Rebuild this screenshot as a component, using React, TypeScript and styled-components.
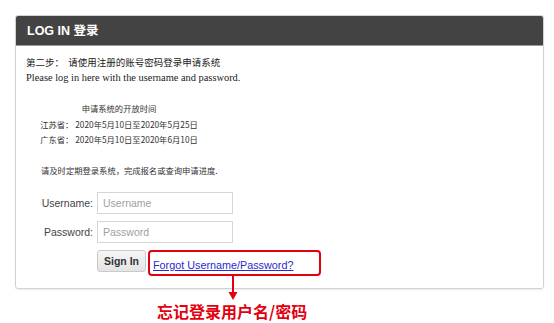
import React from "react";
import styled, { createGlobalStyle } from "styled-components";

const GlobalStyle = createGlobalStyle`
  html, body {
    margin: 0;
    padding: 0;
    background: #ffffff;
  }
  body {
    font-family: "Liberation Sans", Arial, "Noto Sans CJK SC", sans-serif;
  }
`;

const App = () => {
  return (
    <Page>
      <GlobalStyle />
      <Panel>
        <Header>LOG IN 登录</Header>
        <Body>
          <StepLine>第二步：&nbsp; 请使用注册的账号密码登录申请系统</StepLine>
          <SerifLine>Please log in here with the username and password.</SerifLine>

          <Schedule>
            <SmallLine>申请系统的开放时间</SmallLine>
            <SmallLine>江苏省：&nbsp;2020年5月10日至2020年5月25日</SmallLine>
            <SmallLine>广东省：&nbsp;2020年5月10日至2020年6月10日</SmallLine>
          </Schedule>

          <Notice>请及时定期登录系统，完成报名或查询申请进度.</Notice>

          <Form>
            <FieldLabel>Username:</FieldLabel>
            <Input placeholder="Username" />
            <FieldLabel>Password:</FieldLabel>
            <Input placeholder="Password" type="password" />
            <span />
            <Actions>
              <SignIn>Sign In</SignIn>
              <Highlight>
                <ForgotLink href="#">Forgot Username/Password?</ForgotLink>
                <Arrow width="10" height="26" viewBox="0 0 10 26">
                  <line x1="5" y1="0" x2="5" y2="17" stroke="#e3000f" strokeWidth="2" />
                  <polygon points="0.5,16 9.5,16 5,24" fill="#e3000f" />
                </Arrow>
              </Highlight>
            </Actions>
          </Form>
        </Body>
      </Panel>
      <Callout>忘记登录用户名/密码</Callout>
    </Page>
  );
};

export default App;

const Page = styled.div`
  width: 554px;
  height: 323px;
  box-sizing: border-box;
  padding: 15px 10px 0 15px;
  overflow: hidden;
`;

const Panel = styled.div`
  width: 529px;
  height: 274px;
  box-sizing: border-box;
  border: 1px solid #d2d2d2;
  border-radius: 3px;
  box-shadow: 0 1px 2px rgba(0, 0, 0, 0.08);
`;

const Header = styled.div`
  height: 30px;
  box-sizing: border-box;
  background: #434343;
  border-bottom: 1px solid #9a9a9a;
  color: #ffffff;
  font-family: "Liberation Sans", Arial, "Noto Sans CJK SC", sans-serif;
  font-weight: 700;
  font-size: 12.5px;
  line-height: 30px;
  padding-left: 11px;
  border-radius: 2px 2px 0 0;
`;

const Body = styled.div`
  padding: 8px 10px 0 10px;
  color: #222222;
`;

const StepLine = styled.div`
  font-family: "Noto Sans CJK SC", sans-serif;
  font-size: 9.5px;
  line-height: 16px;
`;

const SerifLine = styled.div`
  font-family: "Liberation Serif", "Times New Roman", serif;
  font-size: 10.4px;
  line-height: 16px;
`;

const Schedule = styled.div`
  width: 186px;
  margin-top: 15px;
  text-align: center;
`;

const SmallLine = styled.div`
  font-family: "Noto Sans CJK SC", sans-serif;
  font-size: 8.3px;
  line-height: 15.5px;
  color: #333333;
`;

const Notice = styled(SmallLine)`
  margin-top: 15px;
  padding-left: 15px;
`;

const Form = styled.div`
  display: grid;
  grid-template-columns: 67px 136px;
  column-gap: 4px;
  row-gap: 7px;
  align-items: center;
  margin-top: 14px;
`;

const FieldLabel = styled.label`
  text-align: right;
  font-size: 10.5px;
  color: #444444;
`;

const Input = styled.input`
  height: 22px;
  box-sizing: border-box;
  border: 1px solid #d6d6d6;
  padding: 0 5px;
  font-family: "Liberation Sans", Arial, sans-serif;
  font-size: 10.5px;
  color: #333333;
  outline: none;
  &::placeholder {
    color: #a0a0a0;
  }
`;

const Actions = styled.div`
  display: flex;
  align-items: flex-start;
  gap: 2px;
  width: 260px;
`;

const SignIn = styled.button`
  width: 49px;
  height: 22px;
  box-sizing: border-box;
  border: 1px solid #c9c9c9;
  border-radius: 3px;
  background: linear-gradient(#f6f6f6, #e4e4e4);
  font-family: "Liberation Sans", Arial, sans-serif;
  font-weight: 700;
  font-size: 10.5px;
  color: #333333;
  padding: 0;
`;

const Highlight = styled.div`
  position: relative;
  width: 173px;
  height: 26px;
  box-sizing: border-box;
  border: 2px solid #e3000f;
  border-radius: 4px;
  padding: 3px 0 0 3px;
`;

const ForgotLink = styled.a`
  font-family: "Liberation Sans", Arial, sans-serif;
  font-size: 10.8px;
  color: #2a2ad0;
  text-decoration: underline;
`;

const Arrow = styled.svg`
  position: absolute;
  left: 78px;
  top: 24px;
`;

const Callout = styled.div`
  margin: 12px 0 0 142px;
  font-family: "Noto Sans CJK SC", sans-serif;
  font-weight: 700;
  font-size: 16px;
  line-height: 20px;
  color: #e3000f;
`;
